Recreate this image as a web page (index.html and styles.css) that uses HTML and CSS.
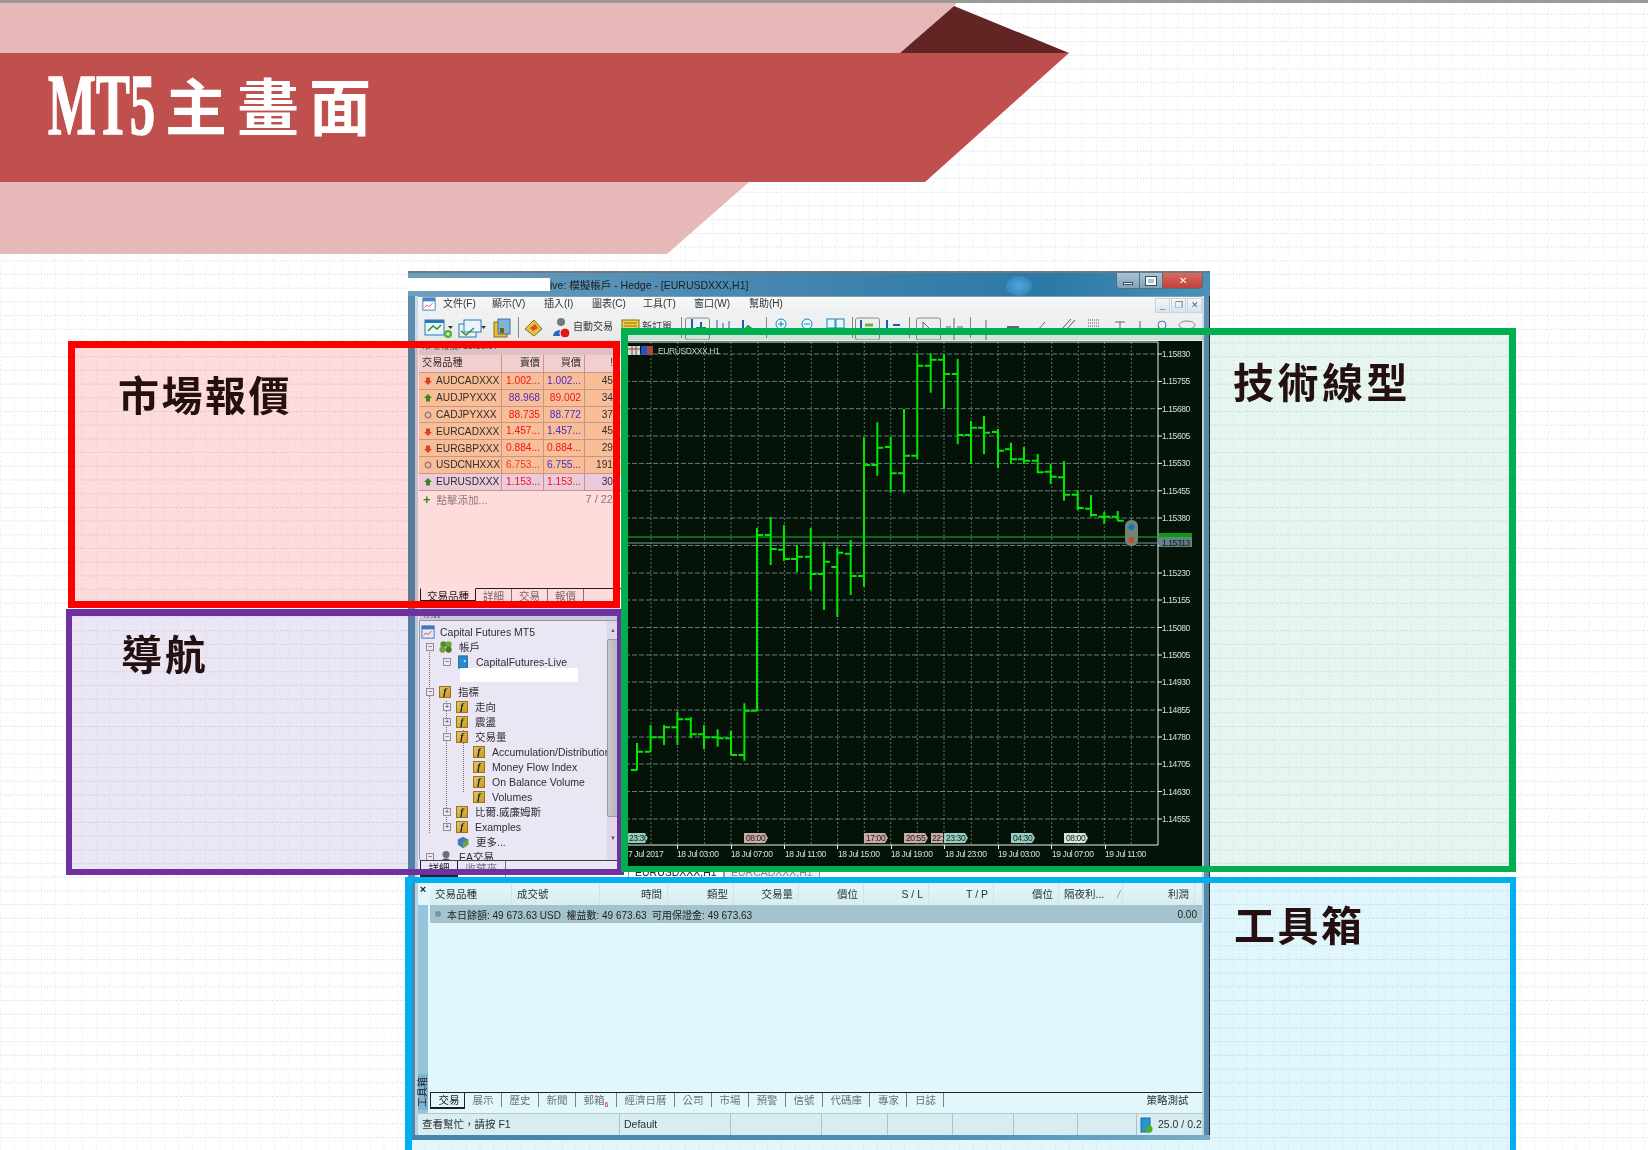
FILE: index.html
```html
<!DOCTYPE html>
<html lang="zh-Hant">
<head>
<meta charset="utf-8">
<title>MT5主畫面</title>
<link rel="stylesheet" href="styles.css">
</head>
<body>
<div class="slide">
  <svg class="paper" width="1648" height="1150" aria-hidden="true">
    <defs>
      <pattern id="dots" width="13.7" height="13.7" patternUnits="userSpaceOnUse">
        <path d="M0 .5H13.7" stroke="#c4d0e6" stroke-dasharray="1 2"/>
        <path d="M.5 0V13.7" stroke="#dce2f0" stroke-dasharray="1 3"/>
      </pattern>
      <symbol id="up" viewBox="0 0 8 8"><path d="M4 0 8 4H6V7.500H2V4H0Z" fill="#3f9a1e"/></symbol>
      <symbol id="down" viewBox="0 0 8 8"><path d="M4 8 0 4H2V.5H6V4H8Z" fill="#e0492c"/></symbol>
      <symbol id="flat" viewBox="0 0 8 8"><circle cx="4" cy="4" r="2.800" fill="none" stroke="#a08f96" stroke-width="1.400"/></symbol>
    </defs>
    <rect width="1648" height="1150" fill="url(#dots)"/>
  </svg>

  <header class="banner">
    <svg class="banner-art" width="1648" height="260" aria-hidden="true">
      <rect width="1648" height="3" fill="#999"/>
      <path d="M0 3H957L900 53H0Z" fill="#e6b8b7"/>
      <path d="M0 182H749L667 254H0Z" fill="#e6b8b7"/>
      <path d="M954 6 1069 53H900Z" fill="#632523"/>
      <path d="M0 53H1069L925 182H0Z" fill="#c0504d"/>
    </svg>
    <h1 class="title"><span class="title-latin">MT5</span><span class="title-cjk">主畫面</span></h1>
  </header>

  <div class="window">
    <div class="titlebar">
      <span class="redact-title"></span>
      <span class="title-text">ive: 模擬帳戶 - Hedge - [EURUSDXXX,H1]</span>
      <span class="glow"></span>
      <div class="win-buttons">
        <span class="wb"><i class="wb-min"></i></span>
        <span class="wb"><i class="wb-max"></i></span>
        <span class="wb wb-close">✕</span>
      </div>
    </div>

    <div class="menubar">
      <svg class="app-icon" viewBox="0 0 16 16"><rect x="1" y="1" width="14" height="14" fill="#fff" stroke="#3d79b8"/><rect x="1" y="1" width="14" height="4" fill="#3d8ad0"/><path d="M3 12 6 9 8 11 12 7" fill="none" stroke="#d8402c"/></svg>
      <span class="menu m1">文件(F)</span>
      <span class="menu m2">顯示(V)</span>
      <span class="menu m3">插入(I)</span>
      <span class="menu m4">圖表(C)</span>
      <span class="menu m5">工具(T)</span>
      <span class="menu m6">窗口(W)</span>
      <span class="menu m7">幫助(H)</span>
      <div class="mdi">
        <span class="mdi-btn">_</span><span class="mdi-btn">❐</span><span class="mdi-btn">✕</span>
      </div>
    </div>

    <div class="toolbar">
      <svg class="tool-a" width="153" height="25" viewBox="420 315 153 25" aria-hidden="true">
        <rect x="425" y="320" width="19" height="15" fill="#eaf4fb" stroke="#2a78b4"/><rect x="425" y="320" width="19" height="3" fill="#2a78b4"/><path d="M428 331 433 326 437 329 441 325" fill="none" stroke="#2d8f2d" stroke-width="1.500"/><circle cx="448" cy="334" r="4" fill="#55b32c"/><path d="M446 334H450M448 332V336" stroke="#fff"/>
        <path d="M446 327H451L448.500 330Z" fill="#333" transform="translate(2 -1)"/>
        <rect x="459" y="324" width="17" height="13" fill="#eaf4fb" stroke="#2a78b4"/><rect x="464" y="320" width="17" height="12" fill="#eaf4fb" stroke="#2a78b4"/><path d="M461 331 466 335 474 328" fill="none" stroke="#2d8f2d" stroke-width="1.500"/>
        <path d="M481 326H486L483.500 329Z" fill="#333"/>
        <rect x="494" y="322" width="13" height="15" fill="#e9c12e" stroke="#8a6d10"/><rect x="498" y="319" width="12" height="15" fill="#7fb3d8" stroke="#4a6d90"/><path d="M500 328h4v5h-4z" fill="#8a5a10"/>
        <rect x="518" y="317" width="1" height="21" fill="#888"/>
        <path d="M525 329 534 320 542 329 534 336Z" fill="#e8c23c" stroke="#8a6d10"/><path d="M530 328 535 324 538 328 533 331Z" fill="#d8502c"/>
        <circle cx="561" cy="322" r="4" fill="#6c7a86"/><path d="M553 336C553 328 569 328 569 336Z" fill="#2a66c0"/><circle cx="565" cy="333" r="5" fill="#e01818" stroke="#fff"/>
      </svg>
      <span class="tool-text t1">自動交易</span>
      <svg class="tool-b" width="30" height="25" viewBox="612 315 30 25" aria-hidden="true"><rect x="622" y="320" width="17" height="13" fill="#f2d040" stroke="#8a6d10"/><path d="M624 323H637M624 326H637M624 329H637" stroke="#8a6d10"/></svg>
      <span class="tool-text t2">新訂單</span>
      <svg class="tool-c" width="531" height="25" viewBox="671 315 531 25" aria-hidden="true">
        <g fill="none" stroke="#888"><path d="M680.500 317V338M765.500 317V338M851.500 317V338M908.500 317V338M969.500 317V338"/><rect x="684.500" y="318" width="24" height="22" rx="2"/><rect x="854.500" y="318" width="24" height="22" rx="2"/><rect x="915.500" y="318" width="24" height="22" rx="2"/></g>
        <path d="M691 319V334M700 322V334" stroke="#1a5fb0" stroke-width="2"/><path d="M695 328H705" stroke="#1c9a2c" stroke-width="2"/>
        <path d="M716 320V334M722 323V334M728 321V334" stroke="#1a5fb0"/><path d="M741 333 747 326 755 332" fill="none" stroke="#1c9a2c" stroke-width="2"/><path d="M742 320V332" stroke="#1a5fb0" stroke-width="2"/>
        <circle cx="780" cy="324" r="5" fill="#dff" stroke="#2a78b4"/><path d="M777 324H783M780 321V327" stroke="#2a78b4"/>
        <circle cx="806" cy="324" r="5" fill="#dff" stroke="#2a78b4"/><path d="M803 324H809" stroke="#2a78b4"/>
        <rect x="826" y="319" width="8" height="9" fill="#dff" stroke="#2a78b4"/><rect x="835" y="319" width="8" height="9" fill="#dff" stroke="#2a78b4"/>
        <path d="M860 320V334" stroke="#1a5fb0" stroke-width="2"/><path d="M864 325H872" stroke="#6ab82c" stroke-width="3"/>
        <path d="M886 320V334" stroke="#1a5fb0" stroke-width="2"/><path d="M892 325H899" stroke="#1a5fb0" stroke-width="2"/><path d="M922 322V333L930 330Z" fill="none" stroke="#666"/>
        <path d="M953 318V340M945 327H950M956 327H962" stroke="#666"/><path d="M985 320V340" stroke="#666"/><path d="M1006 327H1018" stroke="#666" stroke-width="2"/><path d="M1036 331 1044 322" stroke="#666"/><path d="M1060 330 1070 319M1064 331 1074 320" stroke="#555"/>
        <path d="M1087 320H1098M1087 323H1098M1087 326H1098" stroke="#555" stroke-dasharray="1 1"/><path d="M1114 322H1124M1119 322V332" stroke="#666"/><path d="M1139 321V330" stroke="#666"/><circle cx="1161" cy="325" r="4" fill="none" stroke="#2a78b4"/><ellipse cx="1186" cy="325" rx="8" ry="4" fill="#eee" stroke="#888"/>
      </svg>
    </div>

    <div class="main">
      <div class="side">
        <section class="market">
          <div class="panel-title">市場報價: 15:53:07</div>
          <div class="mw-row mw-head"><span>交易品種</span><span class="r">賣價</span><span class="r">買價</span><span class="r">!</span></div>
          <div class="mw-row"><span class="sym"><svg class="ar"><use href="#down"/></svg>AUDCADXXX</span><span class="r red">1.002...</span><span class="r blue">1.002...</span><span class="r">45</span></div>
          <div class="mw-row"><span class="sym"><svg class="ar"><use href="#up"/></svg>AUDJPYXXX</span><span class="r blue">88.968</span><span class="r red">89.002</span><span class="r">34</span></div>
          <div class="mw-row"><span class="sym"><svg class="ar"><use href="#flat"/></svg>CADJPYXXX</span><span class="r red">88.735</span><span class="r blue">88.772</span><span class="r">37</span></div>
          <div class="mw-row"><span class="sym"><svg class="ar"><use href="#down"/></svg>EURCADXXX</span><span class="r red">1.457...</span><span class="r blue">1.457...</span><span class="r">45</span></div>
          <div class="mw-row"><span class="sym"><svg class="ar"><use href="#down"/></svg>EURGBPXXX</span><span class="r red">0.884...</span><span class="r red">0.884...</span><span class="r">29</span></div>
          <div class="mw-row"><span class="sym"><svg class="ar"><use href="#flat"/></svg>USDCNHXXX</span><span class="r orange">6.753...</span><span class="r blue">6.755...</span><span class="r">191</span></div>
          <div class="mw-row mw-last"><span class="sym"><svg class="ar"><use href="#up"/></svg>EURUSDXXX</span><span class="r red">1.153...</span><span class="r red">1.153...</span><span class="r">30</span></div>
          <div class="mw-add"><span class="plus">+</span><span>點擊添加...</span><span class="count">7 / 22</span></div>
          <div class="tabs side-tabs">
            <span class="tab on">交易品種</span><span class="tab">詳細</span><span class="tab">交易</span><span class="tab">報價</span>
          </div>
        </section>

        <section class="navigator">
          <div class="panel-title nav-title">導航<span class="nav-x">×</span></div>
          <div class="tree">
            <i class="vline v1"></i><i class="vline v2"></i><i class="vline v3"></i>
            <div class="node lv0"><svg class="ic" viewBox="0 0 16 16"><rect x="1" y="1" width="14" height="14" fill="#fff" stroke="#3d79b8"/><rect x="1" y="1" width="14" height="4" fill="#3d8ad0"/><path d="M3 12 6 9 8 11 12 7" fill="none" stroke="#d8402c"/></svg>Capital Futures MT5</div>
            <div class="node lv1"><b class="exp">−</b><svg class="ic" viewBox="0 0 16 16"><circle cx="5" cy="5" r="3.500" fill="#5aa02c"/><circle cx="11" cy="5" r="3.500" fill="#79b83a"/><circle cx="4" cy="11" r="3.500" fill="#79b83a"/><circle cx="11" cy="11" r="3.500" fill="#4a8f20"/></svg>帳戶</div>
            <div class="node lv2"><b class="exp">−</b><svg class="ic" viewBox="0 0 14 16"><rect x="2" y="1" width="10" height="14" fill="#2c9ad8" stroke="#1a6ea8"/><rect x="8" y="6" width="2" height="2" fill="#fff"/></svg>CapitalFutures-Live</div>
            <div class="node lv-hidden"></div>
            <div class="node lv1"><b class="exp">−</b><i class="fx">f</i>指標</div>
            <div class="node lv2"><b class="exp">+</b><i class="fx">f</i>走向</div>
            <div class="node lv2"><b class="exp">+</b><i class="fx">f</i>震盪</div>
            <div class="node lv2"><b class="exp">−</b><i class="fx">f</i>交易量</div>
            <div class="node lv3"><i class="fx">f</i>Accumulation/Distribution</div>
            <div class="node lv3"><i class="fx">f</i>Money Flow Index</div>
            <div class="node lv3"><i class="fx">f</i>On Balance Volume</div>
            <div class="node lv3"><i class="fx">f</i>Volumes</div>
            <div class="node lv2"><b class="exp">+</b><i class="fx">f</i>比爾.威廉姆斯</div>
            <div class="node lv2"><b class="exp">+</b><i class="fx">f</i>Examples</div>
            <div class="node lv2 more"><svg class="ic" viewBox="0 0 14 16"><path d="M1 5 7 2 13 5V11L7 15 1 11Z" fill="#4a86c8"/><path d="M7 8V15L13 11V5Z" fill="#79b83a"/></svg>更多...</div>
            <div class="node lv1"><b class="exp">−</b><svg class="ic" viewBox="0 0 16 16"><circle cx="8" cy="5" r="4" fill="#6c7a86"/><path d="M2 15C2 8 14 8 14 15Z" fill="#555"/></svg>EA交易</div>
            <div class="nav-scroll"><span class="up">▲</span><span class="thumb"></span><span class="dn">▼</span></div>
          </div>
          <div class="tabs nav-tabs"><span class="tab on">詳細</span><span class="tab">收藏夾</span></div>
        </section>
      </div>

      <div class="chart-col">
        <svg class="chart" width="577" height="525" viewBox="625 341 577 525">
          <rect x="625" y="341" width="577" height="525" fill="#041208"/>
          <g class="grid">
            <path class="grid-h" d="M625 354H1158M625 381.400H1158M625 408.700H1158M625 436H1158M625 463.400H1158M625 490.800H1158M625 518H1158M625 545.500H1158M625 573H1158M625 600H1158M625 627.500H1158M625 655H1158M625 682H1158M625 710H1158M625 737H1158M625 764H1158M625 791.500H1158M625 819H1158"/>
            <path class="grid-v" d="M651 342V845M677.700 342V845M704.400 342V845M731 342V845M758 342V845M784.600 342V845M811.300 342V845M837.700 342V845M864.300 342V845M890.700 342V845M917.300 342V845M944 342V845M971.300 342V845M998 342V845M1024.300 342V845M1051.700 342V845M1078.300 342V845M1104.300 342V845M1131.300 342V845"/>
          </g>
          <path class="frame" d="M625 342H1158V845H625M1158 354h4M1158 381.400h4M1158 408.700h4M1158 436h4M1158 463.400h4M1158 490.800h4M1158 518h4M1158 545.500h4M1158 573h4M1158 600h4M1158 627.500h4M1158 655h4M1158 682h4M1158 710h4M1158 737h4M1158 764h4M1158 791.500h4M1158 819h4M677.500 845v4M731.500 845v4M784.500 845v4M837.500 845v4M891.500 845v4M944.500 845v4M998.500 845v4M1051.500 845v4M1105.500 845v4"/>
          <path class="lines-g" d="M625 537H1158"/>
          <path class="lines-s" d="M625 543H1158"/>
          <path class="bars" d="M637 743V770M631 770H637M637 751.700H643
            M650.600 725V751.700M644.600 751.700H650.600M650.600 737.300H656.600
            M664 725V745M658 737.300H664M664 727.300H670
            M677.400 711.700V745M671.400 727.300H677.400M677.400 719.300H683.400
            M690.800 717.300V738.300M684.800 719.300H690.800M690.800 734.300H696.800
            M704 725V749.300M698 734.300H704M704 737.300H710
            M717.600 729.300V746.700M711.600 737.300H717.600M717.600 738.300H723.600
            M731 730.700V755M725 738.300H731M731 755H737
            M744.400 703.300V760.700M738.400 755H744.400M744.400 710.700H750.400
            M757 528V710.700M751 710.700H757M757 535H763
            M770.700 517V565M764.700 535H770.700M770.700 549H776.700
            M784 525V561M778 549.700H784M784 559H790
            M797 545V572M791 559H797M797 556.700H803
            M810.700 528V590M804.700 556.700H810.700M810.700 574H816.700
            M824 542V610M818 574H824M824 561.700H830
            M837.300 548V617M831.300 567H837.300M837.300 552.700H843.300
            M850.700 540V595M844.700 553.700H850.700M850.700 576H856.700
            M864 437.300V586.700M858 576H864M864 465H870
            M877.300 422.300V475.700M871.300 465H877.300M877.300 447.700H883.300
            M890.700 436.700V492.700M884.700 447H890.700M890.700 473.300H896.700
            M904 409V492.700M898 473.300H904M904 455.700H910
            M917.300 353.300V459.300M911.300 455.700H917.300M917.300 365.700H923.300
            M930.700 353.300V392.700M924.700 365.700H930.700M930.700 359.700H936.700
            M944 354.300V409M938 359.700H944M944 374H950
            M957.700 359V444.300M951.700 374H957.700M957.700 435H963.700
            M971 421V464M965 435H971M971 427.700H977
            M984 416V454M978 427.700H984M984 432.700H990
            M998 429V468.300M992 432H998M998 450.700H1004
            M1011 442.700V464M1005 449.300H1011M1011 459.300H1017
            M1024 447V464M1018 459.300H1024M1024 460.700H1030
            M1037.700 454V473.300M1031.700 460.700H1037.700M1037.700 472.300H1043.700
            M1050.700 464V484M1044.700 471.700H1050.700M1050.700 476.700H1056.700
            M1064 461V500.700M1058 477.300H1064M1064 494.700H1070
            M1077.700 490.300V510M1071.700 494.700H1077.700M1077.700 508H1083.700
            M1091 495V516.700M1085 508.700H1091M1091 515H1097
            M1104.300 512V524M1098.300 516.700H1104.300M1104.300 516.700H1110.300
            M1117.700 511V521M1111.700 516.700H1117.700M1117.700 520.700H1123.700"/>
          <g class="prices">
            <text x="1162" y="357">1.15830</text><text x="1162" y="384">1.15755</text><text x="1162" y="412">1.15680</text><text x="1162" y="439">1.15605</text><text x="1162" y="466">1.15530</text><text x="1162" y="494">1.15455</text><text x="1162" y="521">1.15380</text><text x="1162" y="576">1.15230</text><text x="1162" y="603">1.15155</text><text x="1162" y="631">1.15080</text><text x="1162" y="658">1.15005</text><text x="1162" y="685">1.14930</text><text x="1162" y="713">1.14855</text><text x="1162" y="740">1.14780</text><text x="1162" y="767">1.14705</text><text x="1162" y="795">1.14630</text><text x="1162" y="822">1.14555</text>
          </g>
          <rect x="1159" y="533" width="33" height="7" fill="#0ba20b"/>
          <rect x="1159" y="537" width="33" height="10" fill="#6b8790"/>
          <text class="cur" x="1162" y="546">1.15313</text>
          <rect x="1125" y="520" width="13" height="26" rx="6" fill="#7d8a80"/>
          <circle cx="1131.500" cy="527" r="3" fill="#1e74c0"/><circle cx="1131.500" cy="540" r="3" fill="#d8502c"/>
          <g class="tags">
            <path class="teal" d="M628 833H645L648 838 645 843H628Z"/><text x="629" y="841">23:30</text>
            <path class="rose" d="M744 833H765L768 838 765 843H744V845Z"/><text x="746" y="841">08:00</text>
            <path class="rose" d="M864 833H885L888 838 885 843H864V845Z"/><text x="866" y="841">17:00</text>
            <path class="rose" d="M904 833H925L928 838 925 843H904V845Z"/><text x="906" y="841">20:55</text>
            <path class="rose" d="M931 833H943V843H931V845Z"/><text x="932" y="841">22:</text>
            <path class="teal" d="M944 833H965L968 838 965 843H944V845Z"/><text x="946" y="841">23:30</text>
            <path class="teal" d="M1011 833H1032L1035 838 1032 843H1011V845Z"/><text x="1013" y="841">04:30</text>
            <path class="pale" d="M1064 833H1085L1088 838 1085 843H1064V845Z"/><text x="1066" y="841">08:00</text>
          </g>
          <g class="times">
            <text x="628" y="857">7 Jul 2017</text><text x="677" y="857">18 Jul 03:00</text><text x="731" y="857">18 Jul 07:00</text><text x="785" y="857">18 Jul 11:00</text><text x="838" y="857">18 Jul 15:00</text><text x="891" y="857">18 Jul 19:00</text><text x="945" y="857">18 Jul 23:00</text><text x="998" y="857">19 Jul 03:00</text><text x="1052" y="857">19 Jul 07:00</text><text x="1105" y="857">19 Jul 11:00</text>
          </g>
          <rect x="628" y="346" width="12" height="9" fill="#dfe7f2"/><path d="M628 349H640M632 346V355M636 346V355" stroke="#c0392b"/>
          <rect x="641" y="346" width="6" height="9" fill="#2a55d8"/><rect x="647" y="346" width="6" height="9" fill="#b6503c"/>
          <text class="sym-label" x="658" y="354">EURUSDXXX,H1</text>
        </svg>
        <div class="chart-tabs"><span class="ctab on">EURUSDXXX,H1</span><span class="ctab">EURCADXXX,H1</span></div>
      </div>
    </div>

    <section class="toolbox">
      <div class="tb-strip"><span class="tb-x">×</span><span class="tb-name">工具箱</span></div>
      <div class="tb-body">
        <div class="tb-grid">
          <span>交易品種</span><span>成交號</span><span class="r">時間</span><span class="r">類型</span><span class="r">交易量</span><span class="r">價位</span><span class="r">S / L</span><span class="r">T / P</span><span class="r">價位</span><span class="overnight">隔夜利... <em>/</em></span><span class="r">利潤</span>
        </div>
        <div class="tb-summary"><span class="tb-sum-text"><i class="dot"></i>本日餘額: 49 673.63 USD&nbsp; 權益數: 49 673.63&nbsp; 可用保證金: 49 673.63</span><span class="tb-sum-val">0.00</span></div>
        <div class="tb-space"></div>
        <div class="tabs tb-tabs">
          <span class="tab on">交易</span><span class="tab">展示</span><span class="tab">歷史</span><span class="tab">新聞</span><span class="tab">郵箱<sup>6</sup></span><span class="tab">經濟日曆</span><span class="tab">公司</span><span class="tab">市場</span><span class="tab">預警</span><span class="tab">信號</span><span class="tab">代碼庫</span><span class="tab">專家</span><span class="tab">日誌</span>
          <span class="tab strategy">策略測試</span>
        </div>
      </div>
    </section>

    <footer class="status">
      <span class="st st-help">查看幫忙，請按 F1</span>
      <span class="st st-prof">Default</span>
      <span class="st"></span><span class="st"></span><span class="st"></span><span class="st"></span><span class="st"></span><span class="st"></span>
      <span class="st st-conn"><svg width="13" height="16" viewBox="0 0 13 16"><rect x="1" y="1" width="9" height="14" fill="#2c9ad8" stroke="#1a6ea8"/><circle cx="9" cy="12" r="3.500" fill="#55b32c"/></svg>25.0 / 0.2</span>
    </footer>
  </div>

  <section class="zone zone-red"><h2>市場報價</h2></section>
  <section class="zone zone-purple"><h2>導航</h2></section>
  <section class="zone zone-blue"><h2>工具箱</h2></section>
  <section class="zone zone-green"><h2>技術線型</h2></section>
  <span class="redact-nav"></span>
</div>
</body>
</html>
```

FILE: styles.css
```css
* { box-sizing: border-box; }
html, body { margin: 0; padding: 0; }
body {
  width: 1648px;
  height: 1150px;
  overflow: hidden;
  background: #fff;
  font-family: "Liberation Sans", "Noto Sans CJK TC", sans-serif;
}
.slide { position: relative; width: 1648px; height: 1150px; overflow: hidden; background: #fff; }
.paper { position: absolute; left: 0; top: 0; }

/* banner */
.banner { position: absolute; left: 0; top: 0; width: 1648px; height: 260px; }
.banner-art { position: absolute; left: 0; top: 0; }
.title {
  position: relative;
  display: flex;
  align-items: flex-start;
  margin: 0;
  padding: 58px 0 0 48px;
  color: #fff;
  font-weight: 700;
  white-space: nowrap;
}
.title-latin {
  display: block;
  width: 117px;
  font: 700 86px/1.1 "Liberation Serif", serif;
  -webkit-text-stroke: 1.500px #fff;
  transform: scaleX(.59);
  transform-origin: left top;
}
.title-cjk {
  display: block;
  padding-top: 9px;
  font: 700 62px/1.2 "Noto Sans CJK TC", sans-serif;
  letter-spacing: 10px;
}

/* window */
.window {
  position: absolute;
  left: 408px;
  top: 271px;
  width: 802px;
  height: 869px;
  display: flex;
  flex-direction: column;
  padding: 0 8px 5px 10px;
  background: linear-gradient(90deg, #5b8db0 0 7px, #c8dce8 7px 10px, #fff 10px calc(100% - 8px), #c9dbe6 calc(100% - 8px) calc(100% - 6px), #5f8fae calc(100% - 6px) calc(100% - 1px), #222 calc(100% - 1px));
  border-top: 2px solid #6a7a84;
  font-size: 10.500px;
  color: #333;
}
.window::after {
  content: "";
  position: absolute;
  left: 0; right: 0; bottom: 0;
  height: 5px;
  background: linear-gradient(90deg, #4a88b0, #5a96bc 70%, #88b4cc);
}
.titlebar {
  position: relative;
  flex: 0 0 23px;
  margin: 0 -8px 0 -10px;
  display: flex;
  align-items: center;
  background: linear-gradient(90deg, #6f9fbe, #4d8cb4 35%, #3a80aa 60%, #2b79a6 80%, #4a92ba);
}
.redact-title { flex: 0 0 142px; height: 13px; background: #fff; }
.title-text { font-size: 10.500px; color: #1c1c1c; }
.glow { position: absolute; left: 598px; top: 3px; width: 26px; height: 20px; border-radius: 50%; background: radial-gradient(#4aa8e0, rgba(74,168,224,0)); }
.win-buttons { position: absolute; right: 7px; top: 0; display: flex; height: 16px; border: 1px solid #54707f; border-top: 0; border-radius: 0 0 4px 4px; overflow: hidden; }
.wb { width: 23px; display: flex; align-items: center; justify-content: center; background: linear-gradient(#a8c4d4, #7ea4ba); border-right: 1px solid #54707f; }
.wb-close { width: 39px; background: linear-gradient(#d86a60, #c24038); color: #fff; font-size: 10px; border: 0; }
.wb-min { width: 10px; height: 3px; margin-top: 5px; background: #fff; border: 1px solid #445; }
.wb-max { width: 10px; height: 8px; background: #a8c4d4; border: 2px solid #fff; outline: 1px solid #445; }

.menubar {
  flex: 0 0 19px;
  min-height: 0;
  display: flex;
  align-items: center;
  padding: 0 0 4px 3px;
  background: linear-gradient(#f7f8f9, #eceef0);
  border-top: 1px solid #7f9fb4;
  position: relative;
}
.app-icon { flex: none; width: 14px; height: 14px; margin: 0 7px 0 1px; }
.menu { font-size: 10px; line-height: 14px; white-space: nowrap; }
.m1 { flex: 0 0 49px; }
.m2 { flex: 0 0 52px; }
.m3 { flex: 0 0 48px; }
.m4 { flex: 0 0 51px; }
.m5 { flex: 0 0 51px; }
.m6 { flex: 0 0 55px; }
.m7 { flex: 0 0 51px; }
.mdi { position: absolute; right: 0; top: 1px; display: flex; gap: 1px; }
.mdi-btn { width: 15px; height: 15px; display: flex; align-items: center; justify-content: center; background: linear-gradient(#f4f8fb, #d6e4ef); border: 1px solid #c7d4de; font-size: 9px; color: #666; line-height: 1; }

.toolbar {
  flex: 0 0 25px;
  display: flex;
  align-items: center;
  padding-left: 2px;
  background: linear-gradient(#f0f1f2, #e8e9ea);
  overflow: hidden;
}
.tool-a, .tool-b, .tool-c { flex: none; display: block; }
.tool-text { flex: none; font-size: 10px; white-space: nowrap; padding-bottom: 4px; }
.t1 { width: 39px; }
.t2 { width: 30px; }

/* main area */
.main { flex: 0 0 537px; display: flex; overflow: hidden; background: #fff; }
.side { flex: 0 0 207px; display: flex; flex-direction: column; }
.market { flex: 0 0 268px; display: flex; flex-direction: column; padding-left: 1px; position: relative; }
.panel-title { flex: 0 0 15px; font-size: 9px; line-height: 12px; padding-left: 3px; color: #555; background: #dcdfe2; white-space: nowrap; }
.mw-row {
  flex: 0 0 16.800px;
  display: grid;
  grid-template-columns: 83px 42px 41px 29px;
  align-items: center;
  background: #f7dcb0;
  box-shadow: inset 0 -1px 0 #c9ad9a;
  white-space: nowrap;
  overflow: hidden;
  font-size: 10.200px;
}
.mw-row > span { padding: 0 3px; height: 100%; line-height: 16px; border-right: 1px solid #c9ad9a; overflow: hidden; }
.mw-row > span:last-child { padding: 0 1px 0 0; border-right: 0; }
.mw-head { flex-basis: 18px; background: #f2f0f0; }
.mw-last { background: #ebeaff; }
.sym { display: flex; align-items: center; }
.ar { flex: none; width: 8px; height: 8px; margin: 0 4px 0 2px; }
.r { text-align: right; }
.red { color: #f01818; }
.blue { color: #4a2fe8; }
.orange { color: #e8482a; }
.mw-add { flex: 0 0 17px; display: flex; align-items: center; color: #888; padding: 0 0 0 4px; }
.plus { color: #3f9a1e; font-weight: 700; font-size: 13px; margin-right: 6px; }
.count { margin-left: auto; padding-right: 12px; font-size: 11px; }
.tabs { display: flex; white-space: nowrap; }
.side-tabs { margin-top: auto; margin-bottom: 6px; height: 14px; margin-left: 1px; border-top: 1px solid #222; color: #777; }
.tab { padding: 0 7.500px; border-right: 1px solid #888; line-height: 14px; }
.tab.on { color: #222; background: #fff; border: 1px solid #222; border-top: 0; border-bottom: 2px solid #222; }
.side-tabs .tab { padding: 0 7px; }
.side-tabs .on { width: 56px; padding: 0 6px; margin-top: -1px; border-top: 1px solid #fff; }

.navigator { flex: 1; display: flex; flex-direction: column; padding-left: 1px; min-height: 0; }
.nav-title { position: relative; flex-basis: 10px; }
.nav-x { position: absolute; right: 8px; top: -2px; font-weight: 700; font-size: 11px; color: #222; }
.tree { position: relative; flex: 1; min-height: 0; overflow: hidden; border-top: 1px solid #a8a8a8; border-left: 1px solid #a8a8a8; padding-top: 3px; margin-right: 6px; }
.node { position: relative; display: flex; align-items: center; height: 15px; white-space: nowrap; font-size: 10.500px; }
.lv0 { padding-left: 1px; }
.lv1 { padding-left: 6px; }
.lv2 { padding-left: 23px; }
.lv3 { padding-left: 53px; }
.more { padding-left: 36px; }
.exp { flex: none; width: 8px; height: 8px; margin-right: 5px; border: 1px solid #9a9aa0; font: 400 7px/6px "Liberation Sans", sans-serif; text-align: center; background: #fff; }
.ic { flex: none; width: 14px; height: 14px; margin-right: 6px; }
.lv0 .ic { margin-right: 5px; }
.fx { flex: none; width: 12px; height: 12px; margin-right: 7px; background: linear-gradient(135deg, #f4dc6a, #e0aa24); border: 1px solid #a88018; color: #222; font: italic 700 10px/10px "Liberation Serif", serif; text-align: center; }
.vline { position: absolute; width: 0; border-left: 1px dotted #777; }
.v1 { left: 9px; top: 22px; height: 190px; }
.v2 { left: 26px; top: 80px; height: 125px; }
.v3 { left: 43px; top: 109px; height: 62px; }
.nav-scroll { position: absolute; right: 0; top: 0; bottom: 0; width: 12px; display: flex; flex-direction: column; align-items: center; background: #f2f0f4; font-size: 6px; color: #666; }
.up, .dn { flex: 0 0 16px; line-height: 16px; }
.up { flex-basis: 18px; line-height: 18px; }
.thumb { flex: 0 0 178px; width: 12px; background: linear-gradient(90deg, #dcdcdc, #c4c4c4); border: 1px solid #aaa; border-radius: 2px; }
.dn { margin-top: auto; margin-bottom: 14px; }
.nav-tabs { flex: 0 0 17px; margin-left: 1px; border-top: 1px solid #444; color: #888; }
.nav-tabs .on { width: 38px; }

.chart-col { flex: 1; display: flex; flex-direction: column; padding-top: 1px; min-width: 0; }
.chart { flex: none; display: block; }
.grid path { fill: none; stroke: #9cc2c0; stroke-width: 1; }
.grid-h { stroke-dasharray: 5 2; opacity: .65; }
.grid-v { stroke-dasharray: 2 2; opacity: .6; }
.frame { fill: none; stroke: #fff; stroke-width: 1; }
.lines-g { stroke: #18c818; stroke-width: 1; }
.lines-s { stroke: #8c9c9c; stroke-width: 1; }
.bars { fill: none; stroke: #00f000; stroke-width: 2; }
.prices text, .times text, .sym-label, .cur, .tags text { font: 8.500px "Liberation Sans", sans-serif; letter-spacing: -.4px; }
.prices text, .times text { fill: #e4ecec; }
.sym-label { fill: #d0dcdc; }
.cur { fill: #111; }
.tags text { fill: #222; }
.rose { fill: #e0b0b0; }
.teal { fill: #a4d6d0; }
.pale { fill: #e6f2ec; }
.chart-tabs { flex: 0 0 16px; display: flex; background: #fff; font-size: 10.500px; padding-left: 3px; }
.ctab { padding: 0 6px; color: #888; border: 1px solid #999; border-top: 0; background: #eee; white-space: nowrap; }
.ctab.on { color: #222; background: #fff; width: 96px; }

/* toolbox */
.toolbox { flex: 0 0 236px; display: flex; background: #fff; }
.tb-strip { flex: 0 0 10px; display: flex; flex-direction: column; background: #a9cbdf; }
.tb-x { padding-top: 6px; font-size: 11px; font-weight: 700; line-height: 12px; text-align: center; color: #222; background: #fff; height: 28px; }
.tb-name {
  margin-top: auto;
  margin-bottom: 3px;
  height: 36px;
  writing-mode: vertical-rl;
  text-orientation: sideways;
  transform: rotate(180deg);
  background: #8fb9d2;
  font-size: 10px;
  line-height: 10px;
  color: #222;
  text-align: center;
  white-space: nowrap;
}
.tb-body { flex: 1; min-width: 0; display: flex; flex-direction: column; padding: 6px 0 0 2px; }
.tb-grid {
  flex: 0 0 22px;
  display: grid;
  grid-template-columns: 82px 88px 68px 66px 65px 65px 65px 65px 65px 64px 72px;
  align-items: center;
  height: 22px;
  background: linear-gradient(#fff, #f2f5f6);
  color: #333;
  white-space: nowrap;
}
.tb-grid span { padding: 0 5px; height: 100%; line-height: 22px; border-right: 1px solid #e8eef0; }
.overnight em { color: #999; margin-left: 10px; font-style: italic; }
.tb-summary { flex: 0 0 18px; display: flex; align-items: center; justify-content: space-between; padding: 0 5px; background: #b9cad0; color: #222; white-space: nowrap; font-size: 10px; }
.tb-sum-text { display: flex; align-items: center; white-space: pre; }
.dot { width: 6px; height: 6px; margin-right: 6px; border-radius: 50%; background: #8a9ca4; }
.tb-space { flex: 1; }
.tb-tabs { flex: 0 0 18px; margin-bottom: 3px; border-top: 1px solid #222; color: #777; line-height: 14px; }
.tb-tabs .tab { padding: 0 7.500px; height: 14px; }
.tb-tabs .on { width: 35px; height: 16px; color: #222; }
.tb-tabs sup { color: #e01818; font-size: 7px; vertical-align: sub; }
.strategy { margin-left: auto; margin-right: 6px; border: 0; color: #333; }

/* status */
.status { flex: 0 0 22px; display: grid; grid-template-columns: 202px 111px 91px 66px 65px 61px 64px 59px 1fr; align-items: center; background: #f4f5f5; border-top: 1px solid #ccc; white-space: nowrap; }
.st { height: 100%; line-height: 21px; border-right: 1px solid #c4c8ca; padding-left: 4px; color: #333; overflow: hidden; }
.st-conn { display: flex; align-items: center; gap: 5px; border: 0; padding-left: 3px; }
.st-conn svg { flex: none; }

/* colored zones */
.zone { position: absolute; border-style: solid; margin: 0; }
.zone::before { content: ""; position: absolute; inset: 0; mix-blend-mode: multiply; }
.zone h2 { position: relative; margin: 0; font: 700 41px/1 "Noto Sans CJK TC", sans-serif; color: #241010; white-space: nowrap; }
.zone-red { left: 68px; top: 341px; width: 552px; height: 267px; border-width: 7px; border-color: #ff0000; padding: 25px 0 0 43px; }
.zone-red::before { background: #ffdcdc; }
.zone-red h2 { letter-spacing: 2.500px; }
.zone-purple { left: 66px; top: 609px; width: 558px; height: 266px; border-width: 7px 7px 6px 6px; border-color: #7030a0; padding: 16px 0 0 49px; }
.zone-purple::before { background: #ebe6f4; }
.zone-purple h2 { letter-spacing: 3px; }
.zone-blue { left: 405px; top: 877px; width: 1111px; height: 280px; border-width: 6px 6px 6px 7px; border-color: #00b0f0; padding: 20px 0 0 822px; }
.zone-blue::before { background: #e2f7fb; }
.zone-blue h2 { letter-spacing: 2.500px; }
.zone-green { left: 621px; top: 328px; width: 895px; height: 544px; border-width: 7px 7px 6px 7px; border-color: #00b050; padding: 25px 0 0 605px; }
.zone-green::before { background: #e6f6ee; }
.zone-green h2 { letter-spacing: 3.500px; }
.redact-nav { position: absolute; left: 460px; top: 668px; width: 118px; height: 14px; background: #fff; }
```
